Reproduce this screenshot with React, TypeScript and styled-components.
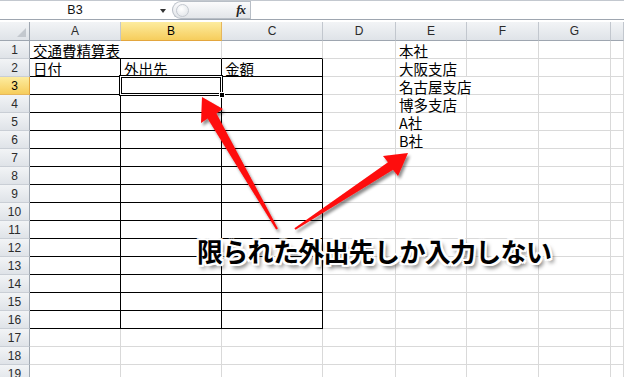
import React from 'react';
import styled, { createGlobalStyle, css } from 'styled-components';

const GlobalStyle = createGlobalStyle`
  html, body { margin: 0; padding: 0; background: #fff; }
  body { width: 624px; height: 377px; overflow: hidden; font-family: "Liberation Sans", Arial, sans-serif; }
`;

const Page = styled.div`
  position: relative;
  width: 624px;
  height: 377px;
  overflow: hidden;
  background: #fff;
`;

const FormulaBar = styled.div`
  display: flex;
  box-sizing: border-box;
  height: 20px;
  border-top: 1px solid #c3c8cf;
  border-bottom: 1px solid #9ea6b0;
  margin-bottom: 2px;
`;

const NameBox = styled.div`
  position: relative;
  box-sizing: border-box;
  width: 172px;
  display: flex;
  align-items: center;
  justify-content: center;
  padding-right: 22px;
  font: 12.5px "Liberation Sans", Arial, sans-serif;
  color: #111;
`;

const Caret = styled.span`
  position: absolute;
  right: 6px;
  top: 8px;
  width: 0;
  height: 0;
  border-left: 3.5px solid transparent;
  border-right: 3.5px solid transparent;
  border-top: 4px solid #333;
`;

const FxGroup = styled.div`
  box-sizing: border-box;
  width: 78px;
  display: flex;
  align-items: center;
  justify-content: space-between;
  padding: 0 5px 0 3px;
  border: 1px solid #b8bec6;
  border-right: none;
  border-radius: 10px 0 0 10px;
  background: linear-gradient(#fbfbfc, #e2e5e9);
`;

const Knob = styled.span`
  width: 11px;
  height: 11px;
  border-radius: 50%;
  border: 1px solid #c4c9d0;
  background: radial-gradient(circle at 40% 35%, #ffffff, #dde1e6);
`;

const FxLabel = styled.span`
  font: italic bold 13px "Liberation Serif", "Times New Roman", serif;
  color: #222;
  letter-spacing: -1px;
`;

const FormulaInput = styled.div`
  flex: 1;
  border-left: 1px solid #b8bec6;
  background: #fff;
`;

const Sheet = styled.div`
  display: grid;
  grid-template-columns: 30px 91px 101px 101px 73px 71px 72px 72px 1fr;
  grid-template-rows: 19px repeat(19, 18px);
`;

const headerBase = css`
  box-sizing: border-box;
  display: flex;
  align-items: center;
  justify-content: center;
  background: linear-gradient(#f2f4f6, #dfe3e8);
  font: 12px "Liberation Sans", Arial, sans-serif;
  line-height: 13px;
  color: #2b2b2b;
`;

const activeHeader = css`
  background: linear-gradient(#fdec9f, #f6cd5c);
  color: #000;
`;

const Corner = styled.div`
  ${headerBase};
  position: relative;
  border-right: 1px solid #9ea6b0;
  border-bottom: 1px solid #9ea6b0;
  &::after {
    content: '';
    position: absolute;
    right: 3px;
    bottom: 3px;
    width: 0;
    height: 0;
    border-left: 9px solid transparent;
    border-bottom: 9px solid #c3c8ce;
  }
`;

const ColHeader = styled.div<{ $active?: boolean }>`
  ${headerBase};
  border-right: 1px solid #c2c7ce;
  border-bottom: 1px solid #9ea6b0;
  ${(p) => p.$active && activeHeader};
  ${(p) => p.$active && css`border-bottom-color: #e3a63e; border-right-color: #e6b65c;`};
`;

const RowHeader = styled.div<{ $active?: boolean }>`
  ${headerBase};
  border-right: 1px solid #9ea6b0;
  border-bottom: 1px solid #c9ced5;
  padding-top: 1px;
  ${(p) => p.$active && activeHeader};
  ${(p) => p.$active && css`border-bottom-color: #e6b65c; border-right-color: #e3a63e;`};
`;

const Cell = styled.div<{ $rb?: boolean; $bb?: boolean; $span?: number; $selected?: boolean }>`
  box-sizing: border-box;
  position: relative;
  grid-column: span ${(p) => p.$span ?? 1};
  border-right: 1px solid ${(p) => (p.$rb ? '#000' : '#d9d9d9')};
  border-bottom: 1px solid ${(p) => (p.$bb ? '#000' : '#d9d9d9')};
  display: flex;
  align-items: flex-end;
  padding-left: 3px;
  font-family: "Noto Sans CJK JP", "Noto Sans", sans-serif;
  font-size: 14.5px;
  line-height: 14px;
  color: #000;
  white-space: nowrap;
  ${(p) =>
    p.$selected &&
    css`
      &::after {
        content: '';
        position: absolute;
        left: -2px;
        top: -2px;
        right: -2px;
        bottom: -2px;
        border: 1px solid #000;
        box-shadow: inset 0 0 0 1px #fff, inset 0 0 0 2px #000;
      }
      &::before {
        content: '';
        position: absolute;
        right: -4px;
        bottom: -4px;
        width: 4px;
        height: 4px;
        background: #000;
        border: 1px solid #fff;
        z-index: 1;
      }
    `}
`;

const ArrowLayer = styled.svg`
  position: absolute;
  left: 0;
  top: 0;
  width: 624px;
  height: 377px;
  pointer-events: none;
`;

const Caption = styled.div`
  position: absolute;
  left: 197px;
  top: 238px;
  font-family: "Noto Sans CJK JP", sans-serif;
  font-weight: 700;
  font-size: 26px;
  line-height: 1;
  letter-spacing: -0.7px;
  color: #000;
  white-space: nowrap;
  text-shadow:
    -2px -2px 0 #fff, 2px -2px 0 #fff, -2px 2px 0 #fff, 2px 2px 0 #fff,
    0 -2px 0 #fff, 0 2px 0 #fff, -2px 0 0 #fff, 2px 0 0 #fff,
    3px 4px 4px rgba(0, 0, 0, 0.6);
`;

const COLS = ['A', 'B', 'C', 'D', 'E', 'F', 'G', 'H'];
const ROWS = 19;

const DATA: Record<string, { text: string; span?: number }> = {
  A1: { text: '交通費精算表', span: 2 },
  A2: { text: '日付' },
  B2: { text: '外出先' },
  C2: { text: '金額' },
  E1: { text: '本社' },
  E2: { text: '大阪支店' },
  E3: { text: '名古屋支店', span: 2 },
  E4: { text: '博多支店' },
  E5: { text: 'A社' },
  E6: { text: 'B社' },
};

function renderRow(r: number) {
  const out: React.ReactNode[] = [
    <RowHeader key={`h${r}`} $active={r === 3}>
      {r}
    </RowHeader>,
  ];
  let c = 0;
  while (c < COLS.length) {
    const id = `${COLS[c]}${r}`;
    const d = DATA[id];
    const span = d?.span ?? 1;
    const last = c + span - 1;
    const inTable = c <= 2;
    const rb = last <= 2 && r >= 2 && r <= 16;
    const bb = inTable && r >= 1 && r <= 16;
    out.push(
      <Cell key={id} $span={span} $rb={rb} $bb={bb} $selected={id === 'B3'}>
        {d?.text}
      </Cell>
    );
    c += span;
  }
  return out;
}

export default function App() {
  return (
    <Page>
      <GlobalStyle />
      <FormulaBar>
        <NameBox>
          B3
          <Caret />
        </NameBox>
        <FxGroup>
          <Knob />
          <FxLabel>fx</FxLabel>
        </FxGroup>
        <FormulaInput />
      </FormulaBar>
      <Sheet>
        <Corner />
        {COLS.map((c) => (
          <ColHeader key={c} $active={c === 'B'}>
            {c === 'H' ? '' : c}
          </ColHeader>
        ))}
        {Array.from({ length: ROWS }, (_, i) => renderRow(i + 1))}
      </Sheet>
      <ArrowLayer viewBox="0 0 624 377">
        <defs>
          <filter id="arrowShadow" x="-20%" y="-20%" width="140%" height="140%">
            <feDropShadow dx="2" dy="3" stdDeviation="1.5" floodColor="#000" floodOpacity="0.45" />
          </filter>
        </defs>
        <g fill="#fe0a0a" filter="url(#arrowShadow)">
          <polygon points="202,97 223,109 216.4,113.5 277.9,228.5 276.1,229.5 207.6,118.5 201,123" />
          <polygon points="408,153 398,176 393,169.7 295.6,229.8 294.4,228.2 388,162.3 383,156" />
        </g>
      </ArrowLayer>
      <Caption>限られた外出先しか入力しない</Caption>
    </Page>
  );
}
